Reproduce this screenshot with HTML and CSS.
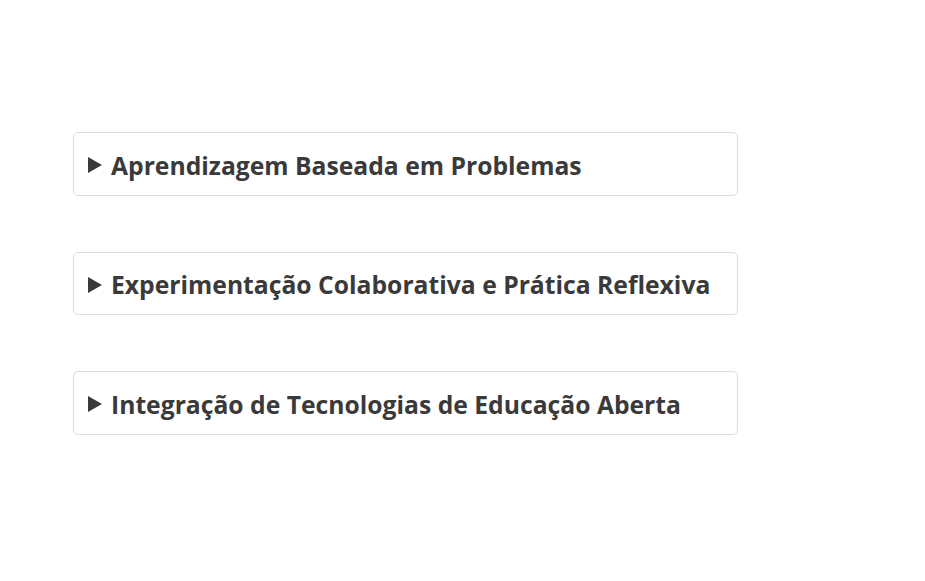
FILE: index.html
```html
<!DOCTYPE html>
<html lang="pt">
<head>
<meta charset="utf-8">
<link rel="stylesheet" href="styles.css">
</head>
<body>
<main class="list">
  <details class="item">
    <summary class="item-summary"><span class="marker"></span>Aprendizagem Baseada em Problemas</summary>
  </details>
  <details class="item">
    <summary class="item-summary"><span class="marker"></span>Experimentação Colaborativa e Prática Reflexiva</summary>
  </details>
  <details class="item">
    <summary class="item-summary"><span class="marker"></span>Integração de Tecnologias de Educação Aberta</summary>
  </details>
</main>
</body>
</html>
```
FILE: styles.css
```css
html, body {
  margin: 0;
  padding: 0;
  background: #fff;
}
body {
  font-family: "Open Sans", "Noto Sans", sans-serif;
  color: #3a3a3a;
}
.list {
  display: flex;
  flex-direction: column;
  gap: 56px;
  width: 665px;
  padding: 132px 0 0 73px;
}
.item {
  border: 1px solid #dcdcdc;
  border-radius: 5px;
  height: 63.5px;
  box-sizing: border-box;
}
.item-summary {
  list-style: none;
  display: flex;
  align-items: center;
  height: 61.5px;
  padding-left: 14px;
  padding-top: 3px;
  box-sizing: border-box;
  font-size: 24.7px;
  font-weight: 700;
  cursor: pointer;
}
.item-summary::-webkit-details-marker { display: none; }
.marker {
  flex: none;
  width: 0;
  height: 0;
  border-top: 8px solid transparent;
  border-bottom: 8px solid transparent;
  border-left: 14px solid #3a3a3a;
  margin-right: 9px;
}
```
